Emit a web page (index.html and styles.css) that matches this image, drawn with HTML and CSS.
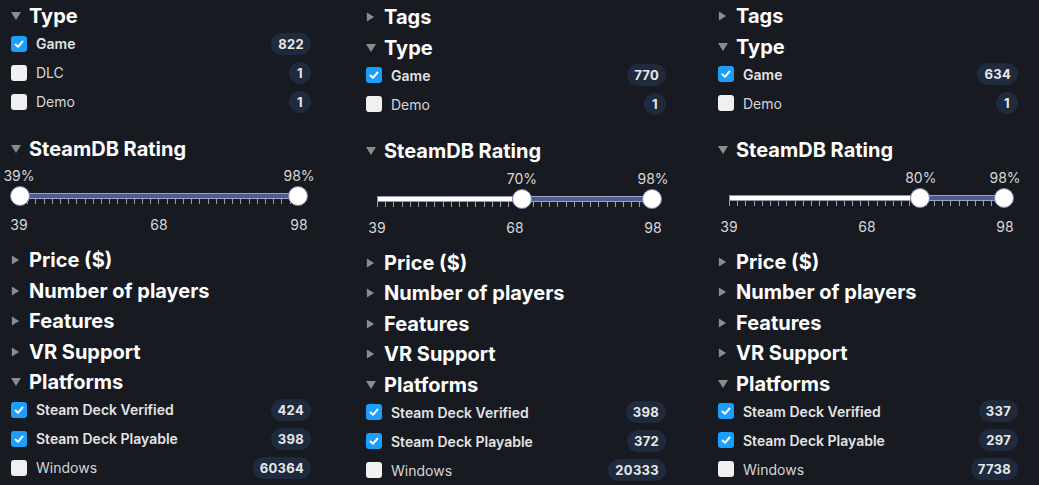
FILE: index.html
```html
<!DOCTYPE html>
<html lang="en">
<head>
<meta charset="utf-8">
<title>Filters</title>
<link rel="stylesheet" href="styles.css">
</head>
<body>
<div class="cols">

  <!-- Column 1 -->
  <div class="col col-a">
    <section class="group">
      <h3 class="head open"><svg class="caret" viewBox="0 0 10 10"><polygon points="0,1 10,1 5,9"/></svg>Type</h3>
      <ul class="opts">
        <li class="opt on"><span class="cb"><svg viewBox="0 0 16 16"><polyline points="4.5,8.5 7,10.8 11.5,5.5"/></svg></span><span class="lbl">Game</span><span class="badge">822</span></li>
        <li class="opt"><span class="cb"></span><span class="lbl">DLC</span><span class="badge">1</span></li>
        <li class="opt"><span class="cb"></span><span class="lbl">Demo</span><span class="badge">1</span></li>
      </ul>
    </section>
    <section class="group">
      <h3 class="head open"><svg class="caret" viewBox="0 0 10 10"><polygon points="0,1 10,1 5,9"/></svg>SteamDB Rating</h3>
      <div class="slider slider-a">
        <div class="pcts">
          <span class="pct" style="left:0%">39%</span>
          <span class="pct" style="left:100%">98%</span>
        </div>
        <div class="track">
          <div class="fill" style="left:0%;right:0%"></div>
          <span class="thumb" style="left:0%"></span>
          <span class="thumb" style="left:100%"></span>
        </div>
        <div class="ticks"></div>
        <div class="scale"><span>39</span><span>68</span><span>98</span></div>
      </div>
    </section>
    <h3 class="head"><svg class="caret" viewBox="0 0 10 10"><polygon points="1,0 9,5 1,10"/></svg>Price ($)</h3>
    <h3 class="head"><svg class="caret" viewBox="0 0 10 10"><polygon points="1,0 9,5 1,10"/></svg>Number of players</h3>
    <h3 class="head"><svg class="caret" viewBox="0 0 10 10"><polygon points="1,0 9,5 1,10"/></svg>Features</h3>
    <h3 class="head"><svg class="caret" viewBox="0 0 10 10"><polygon points="1,0 9,5 1,10"/></svg>VR Support</h3>
    <section class="group">
      <h3 class="head open"><svg class="caret" viewBox="0 0 10 10"><polygon points="0,1 10,1 5,9"/></svg>Platforms</h3>
      <ul class="opts">
        <li class="opt on"><span class="cb"><svg viewBox="0 0 16 16"><polyline points="4.5,8.5 7,10.8 11.5,5.5"/></svg></span><span class="lbl">Steam Deck Verified</span><span class="badge">424</span></li>
        <li class="opt on"><span class="cb"><svg viewBox="0 0 16 16"><polyline points="4.5,8.5 7,10.8 11.5,5.5"/></svg></span><span class="lbl">Steam Deck Playable</span><span class="badge">398</span></li>
        <li class="opt"><span class="cb"></span><span class="lbl">Windows</span><span class="badge">60364</span></li>
      </ul>
    </section>
  </div>

  <!-- Column 2 -->
  <div class="col col-b">
    <h3 class="head"><svg class="caret" viewBox="0 0 10 10"><polygon points="1,0 9,5 1,10"/></svg>Tags</h3>
    <section class="group">
      <h3 class="head open"><svg class="caret" viewBox="0 0 10 10"><polygon points="0,1 10,1 5,9"/></svg>Type</h3>
      <ul class="opts">
        <li class="opt on"><span class="cb"><svg viewBox="0 0 16 16"><polyline points="4.5,8.5 7,10.8 11.5,5.5"/></svg></span><span class="lbl">Game</span><span class="badge">770</span></li>
        <li class="opt"><span class="cb"></span><span class="lbl">Demo</span><span class="badge">1</span></li>
      </ul>
    </section>
    <section class="group">
      <h3 class="head open"><svg class="caret" viewBox="0 0 10 10"><polygon points="0,1 10,1 5,9"/></svg>SteamDB Rating</h3>
      <div class="slider">
        <div class="pcts">
          <span class="pct" style="left:52.5%">70%</span>
          <span class="pct" style="left:100%">98%</span>
        </div>
        <div class="track">
          <div class="fill" style="left:52.5%;right:0%"></div>
          <span class="thumb" style="left:52.5%"></span>
          <span class="thumb" style="left:100%"></span>
        </div>
        <div class="ticks"></div>
        <div class="scale"><span>39</span><span>68</span><span>98</span></div>
      </div>
    </section>
    <h3 class="head"><svg class="caret" viewBox="0 0 10 10"><polygon points="1,0 9,5 1,10"/></svg>Price ($)</h3>
    <h3 class="head"><svg class="caret" viewBox="0 0 10 10"><polygon points="1,0 9,5 1,10"/></svg>Number of players</h3>
    <h3 class="head"><svg class="caret" viewBox="0 0 10 10"><polygon points="1,0 9,5 1,10"/></svg>Features</h3>
    <h3 class="head"><svg class="caret" viewBox="0 0 10 10"><polygon points="1,0 9,5 1,10"/></svg>VR Support</h3>
    <section class="group">
      <h3 class="head open"><svg class="caret" viewBox="0 0 10 10"><polygon points="0,1 10,1 5,9"/></svg>Platforms</h3>
      <ul class="opts">
        <li class="opt on"><span class="cb"><svg viewBox="0 0 16 16"><polyline points="4.5,8.5 7,10.8 11.5,5.5"/></svg></span><span class="lbl">Steam Deck Verified</span><span class="badge">398</span></li>
        <li class="opt on"><span class="cb"><svg viewBox="0 0 16 16"><polyline points="4.5,8.5 7,10.8 11.5,5.5"/></svg></span><span class="lbl">Steam Deck Playable</span><span class="badge">372</span></li>
        <li class="opt"><span class="cb"></span><span class="lbl">Windows</span><span class="badge">20333</span></li>
      </ul>
    </section>
  </div>

  <!-- Column 3 -->
  <div class="col col-c">
    <h3 class="head"><svg class="caret" viewBox="0 0 10 10"><polygon points="1,0 9,5 1,10"/></svg>Tags</h3>
    <section class="group">
      <h3 class="head open"><svg class="caret" viewBox="0 0 10 10"><polygon points="0,1 10,1 5,9"/></svg>Type</h3>
      <ul class="opts">
        <li class="opt on"><span class="cb"><svg viewBox="0 0 16 16"><polyline points="4.5,8.5 7,10.8 11.5,5.5"/></svg></span><span class="lbl">Game</span><span class="badge">634</span></li>
        <li class="opt"><span class="cb"></span><span class="lbl">Demo</span><span class="badge">1</span></li>
      </ul>
    </section>
    <section class="group">
      <h3 class="head open"><svg class="caret" viewBox="0 0 10 10"><polygon points="0,1 10,1 5,9"/></svg>SteamDB Rating</h3>
      <div class="slider">
        <div class="pcts">
          <span class="pct" style="left:69.5%">80%</span>
          <span class="pct" style="left:100%">98%</span>
        </div>
        <div class="track">
          <div class="fill" style="left:69.5%;right:0%"></div>
          <span class="thumb" style="left:69.5%"></span>
          <span class="thumb" style="left:100%"></span>
        </div>
        <div class="ticks"></div>
        <div class="scale"><span>39</span><span>68</span><span>98</span></div>
      </div>
    </section>
    <h3 class="head"><svg class="caret" viewBox="0 0 10 10"><polygon points="1,0 9,5 1,10"/></svg>Price ($)</h3>
    <h3 class="head"><svg class="caret" viewBox="0 0 10 10"><polygon points="1,0 9,5 1,10"/></svg>Number of players</h3>
    <h3 class="head"><svg class="caret" viewBox="0 0 10 10"><polygon points="1,0 9,5 1,10"/></svg>Features</h3>
    <h3 class="head"><svg class="caret" viewBox="0 0 10 10"><polygon points="1,0 9,5 1,10"/></svg>VR Support</h3>
    <section class="group">
      <h3 class="head open"><svg class="caret" viewBox="0 0 10 10"><polygon points="0,1 10,1 5,9"/></svg>Platforms</h3>
      <ul class="opts">
        <li class="opt on"><span class="cb"><svg viewBox="0 0 16 16"><polyline points="4.5,8.5 7,10.8 11.5,5.5"/></svg></span><span class="lbl">Steam Deck Verified</span><span class="badge">337</span></li>
        <li class="opt on"><span class="cb"><svg viewBox="0 0 16 16"><polyline points="4.5,8.5 7,10.8 11.5,5.5"/></svg></span><span class="lbl">Steam Deck Playable</span><span class="badge">297</span></li>
        <li class="opt"><span class="cb"></span><span class="lbl">Windows</span><span class="badge">7738</span></li>
      </ul>
    </section>
  </div>

</div>
</body>
</html>
```

FILE: styles.css
```css
* { box-sizing: border-box; }

html, body {
  margin: 0;
  padding: 0;
  background: #171a21;
  height: 100%;
  overflow: hidden;
}

body {
  font-family: Inter, "Noto Sans", "Liberation Sans", sans-serif;
  color: #e6e6e6;
}

.cols {
  display: flex;
  align-items: flex-start;
  padding-left: 11px;
}

.col {
  width: 300px;
  flex: none;
}

.col-a { padding-top: 1px; }
.col-b { padding-top: 2px; margin-left: 55px; }
.col-c { padding-top: 1px; margin-left: 52px; }

.group { margin: 0; }

.head {
  margin: 0;
  height: 30.5px;
  display: flex;
  align-items: center;
  gap: 8px;
  font-size: 20px;
  font-weight: 700;
  color: #ffffff;
  white-space: nowrap;
}

.caret {
  width: 10px;
  height: 10px;
  flex: none;
  fill: #8c8c8c;
}

.head:not(.open) .caret {
  width: 9px;
  margin-right: 1px;
}

.opts {
  list-style: none;
  margin: -2.5px 0 17.5px;
  padding: 0;
}

.opt {
  height: 29px;
  display: flex;
  align-items: center;
}

.cb {
  width: 16px;
  height: 16px;
  border-radius: 3px;
  background: #f0f0f0;
  flex: none;
  display: flex;
  align-items: center;
  justify-content: center;
}

.cb svg {
  width: 16px;
  height: 16px;
  fill: none;
  stroke: #ffffff;
  stroke-width: 2;
  stroke-linecap: round;
  stroke-linejoin: round;
}

.opt.on .cb { background: #1a9fff; }

.lbl {
  margin-left: 9px;
  flex: 1;
  font-size: 14px;
  font-weight: 400;
  color: #d6d6d6;
  white-space: nowrap;
}

.opt.on .lbl {
  font-weight: 600;
  color: #e4e4e4;
}

.badge {
  flex: none;
  min-width: 22px;
  height: 22px;
  padding: 0 7px;
  border-radius: 11px;
  background: #1f2b3d;
  color: #e8e8e8;
  font-size: 13px;
  font-weight: 700;
  display: flex;
  align-items: center;
  justify-content: center;
  letter-spacing: 0.3px;
}

/* slider */
.slider {
  height: 81px;
  padding: 4px 13px 0 11px;
}

.slider-a { padding-left: 8px; padding-right: 12px; }

.pcts {
  position: relative;
  height: 16px;
}

.pct {
  position: absolute;
  top: 0;
  transform: translateX(-50%);
  font-size: 14px;
  line-height: 16px;
  color: #d8d8d8;
  white-space: nowrap;
}

.track {
  position: relative;
  margin-top: 9px;
  height: 6px;
  background: #ffffff;
  border: 1px solid #8f95b5;
}

.fill {
  position: absolute;
  top: -1px;
  bottom: -1px;
  background: #4f5a92;
  border-top: 1px solid #9ea4c6;
  border-bottom: 1px solid #9ea4c6;
}

.thumb {
  position: absolute;
  top: 50%;
  width: 20px;
  height: 20px;
  border-radius: 50%;
  background: #ffffff;
  border: 1.5px solid #7b82a6;
  transform: translate(-50%, -50%);
}

.ticks {
  height: 5px;
  background: repeating-linear-gradient(to right, #9a9fb5 0 1px, transparent 1px 8.2px);
}

.scale {
  margin-top: 13px;
  display: flex;
  justify-content: space-between;
}

.scale span {
  width: 0;
  display: flex;
  justify-content: center;
  font-size: 14px;
  line-height: 16px;
  color: #d8d8d8;
  white-space: nowrap;
}
```
